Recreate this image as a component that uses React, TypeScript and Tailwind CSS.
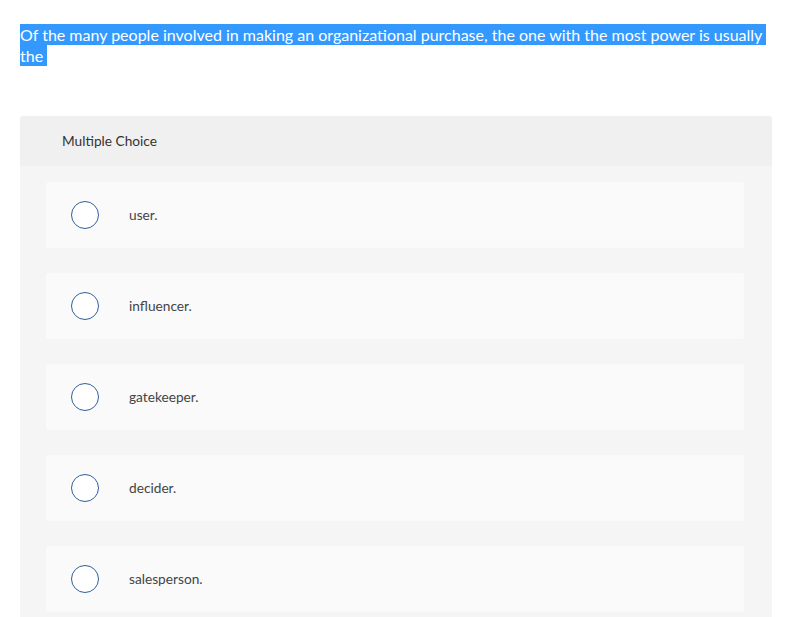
const options = ["user.", "influencer.", "gatekeeper.", "decider.", "salesperson."];

export default function App() {
  return (
    <div className="min-h-screen bg-white pt-6 font-['Lato','Liberation_Sans',sans-serif]">
      <p className="mx-5 text-[16px] leading-[21px] text-white">
        <span className="bg-[#3399ff] py-px pr-1 [box-decoration-break:clone]">
          Of the many people involved in making an organizational purchase, the one with the most power is usually the
        </span>
      </p>

      <div className="mx-5 mt-[50px] w-[752px] overflow-hidden rounded-t-[3px] bg-[#f5f5f5]">
        <div className="flex h-[50px] items-center bg-[#f0f0f0] pl-[42px] text-[13.7px] text-[#333]">
          Multiple Choice
        </div>
        <div className="flex flex-col gap-[25px] pt-4 pr-[28px] pb-6 pl-[26px]">
          {options.map((opt) => (
            <div
              key={opt}
              className="flex h-[66px] items-center rounded-[3px] bg-[#fafafa] pl-[25px]"
            >
              <span className="h-[28px] w-[28px] shrink-0 rounded-full border-[1.5px] border-[#2f5f9e] bg-white" />
              <span className="ml-[30px] text-[13.7px] text-[#444]">{opt}</span>
            </div>
          ))}
        </div>
      </div>
    </div>
  );
}
